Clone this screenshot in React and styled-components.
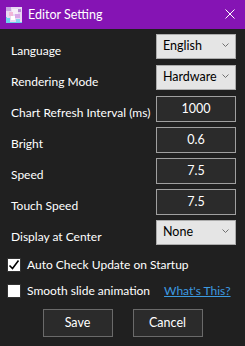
import styled, { createGlobalStyle } from "styled-components";

const GlobalStyle = createGlobalStyle`
  html, body {
    margin: 0;
    padding: 0;
    background: #202020;
  }
  body {
    font-family: Lato, "Noto Sans", sans-serif;
  }
`;

const rows = [
  { label: "Language", kind: "combo", value: "English" },
  { label: "Rendering Mode", kind: "combo", value: "Hardware" },
  { label: "Chart Refresh Interval (ms)", kind: "text", value: "1000" },
  { label: "Bright", kind: "text", value: "0.6" },
  { label: "Speed", kind: "text", value: "7.5" },
  { label: "Touch Speed", kind: "text", value: "7.5" },
  { label: "Display at Center", kind: "combo", value: "None" },
];

// little app icon, roughly the pastel picture in the title bar
const AppIcon = () => (
  <svg width="16" height="16" viewBox="0 0 16 16">
    <rect width="16" height="16" fill="#e9d8f2" />
    <rect x="0" y="0" width="5" height="4" fill="#c6a3e0" />
    <rect x="6" y="2" width="6" height="5" fill="#f6eef9" />
    <rect x="3" y="5" width="4" height="4" fill="#f2b6d8" />
    <rect x="9" y="7" width="5" height="4" fill="#d7a6e8" />
    <rect x="5" y="9" width="4" height="4" fill="#ffffff" />
    <rect x="1" y="11" width="3" height="4" fill="#6bd4ee" />
    <rect x="10" y="12" width="4" height="3" fill="#8ad9f0" />
    <rect x="12" y="2" width="3" height="3" fill="#b58ad0" />
    <rect x="0" y="15" width="16" height="1" fill="#6bd4ee" />
    <rect x="0" y="10" width="1" height="6" fill="#6bd4ee" />
  </svg>
);

const CloseIcon = () => (
  <svg width="10" height="10" viewBox="0 0 10 10">
    <path d="M0.5 0.5 L9.5 9.5 M9.5 0.5 L0.5 9.5" stroke="#ffffff" strokeWidth="1" fill="none" />
  </svg>
);

const Chevron = () => (
  <svg width="7" height="4" viewBox="0 0 7 4">
    <path d="M0.5 0.5 L3.5 3.5 L6.5 0.5" stroke="#707070" strokeWidth="1" fill="none" />
  </svg>
);

const Check = () => (
  <svg width="12" height="12" viewBox="0 0 12 12">
    <path d="M1.5 6.5 L4.5 9.5 L10.5 1.5" stroke="#000000" strokeWidth="1.6" fill="none" />
  </svg>
);

const App = () => {
  return (
    <>
      <GlobalStyle />
      <Window>
        <TitleBar>
          <AppIcon />
          <Title>Editor Setting</Title>
          <CloseButton>
            <CloseIcon />
          </CloseButton>
        </TitleBar>
        <Content>
          {rows.map((row) => (
            <Row key={row.label}>
              <Label>{row.label}</Label>
              {row.kind === "combo" ? (
                <Combo>
                  <span>{row.value}</span>
                  <Chevron />
                </Combo>
              ) : (
                <TextBox>{row.value}</TextBox>
              )}
            </Row>
          ))}
          <CheckRow $top={6}>
            <CheckBox>
              <Check />
            </CheckBox>
            <CheckLabel>Auto Check Update on Startup</CheckLabel>
          </CheckRow>
          <CheckRow $top={11}>
            <CheckBox />
            <CheckLabel>Smooth slide animation</CheckLabel>
            <Link>What's This?</Link>
          </CheckRow>
          <Buttons>
            <Button>Save</Button>
            <Button>Cancel</Button>
          </Buttons>
        </Content>
      </Window>
    </>
  );
};

const Window = styled.div`
  width: 245px;
  height: 346px;
  background: #202020;
  display: flex;
  flex-direction: column;
  overflow: hidden;
  border-radius: 0 0 7px 7px;
  box-sizing: border-box;
`;

const TitleBar = styled.div`
  height: 29px;
  background: #8514b4;
  display: flex;
  align-items: center;
  padding: 0 10px 0 6px;
  flex-shrink: 0;
`;

const Title = styled.div`
  color: #ffffff;
  font-size: 12.5px;
  margin-left: 6px;
  flex: 1;
`;

const CloseButton = styled.div`
  display: flex;
  align-items: center;
  margin-top: -1px;
`;

const Content = styled.div`
  padding: 5px 9px 0 11px;
  display: flex;
  flex-direction: column;
`;

const Row = styled.div`
  height: 31px;
  display: flex;
  justify-content: space-between;
`;

const Label = styled.div`
  color: #ffffff;
  font-size: 12px;
  line-height: 16px;
  padding-top: 9px;
  white-space: nowrap;
`;

const Combo = styled.div`
  width: 80px;
  height: 25px;
  box-sizing: border-box;
  background: #e5e5e5;
  border: 1px solid #acacac;
  display: flex;
  align-items: center;
  justify-content: space-between;
  padding: 0 6px 3px 6px;
  font-size: 12.5px;
  color: #000000;
  flex-shrink: 0;
`;

const TextBox = styled.div`
  width: 80px;
  height: 26px;
  box-sizing: border-box;
  background: #2b2b2b;
  border: 1px solid #a0a0a0;
  display: flex;
  align-items: center;
  justify-content: center;
  padding-bottom: 2px;
  font-size: 12.5px;
  color: #ffffff;
  flex-shrink: 0;
`;

const CheckRow = styled.div`
  display: flex;
  align-items: center;
  margin-left: -4px;
  margin-top: ${(props) => props.$top}px;
  height: 15px;
  white-space: nowrap;
`;

const CheckBox = styled.div`
  width: 14px;
  height: 14px;
  box-sizing: border-box;
  background: #ffffff;
  border: 1px solid #333333;
  display: flex;
  align-items: center;
  justify-content: center;
  flex-shrink: 0;
`;

const CheckLabel = styled.div`
  color: #ffffff;
  font-size: 12px;
  margin-left: 6px;
`;

const Link = styled.a`
  color: #3d9be0;
  font-size: 12px;
  text-decoration: underline;
  margin-left: 14px;
  cursor: pointer;
`;

const Buttons = styled.div`
  display: flex;
  justify-content: center;
  gap: 20px;
  margin-top: 11px;
  margin-left: -2px;
`;

const Button = styled.div`
  width: 70px;
  height: 28px;
  box-sizing: border-box;
  background: #2b2b2b;
  border: 1px solid #6a6a6a;
  color: #ffffff;
  font-size: 12.5px;
  display: flex;
  align-items: center;
  justify-content: center;
  padding-bottom: 2px;
`;

export default App;
